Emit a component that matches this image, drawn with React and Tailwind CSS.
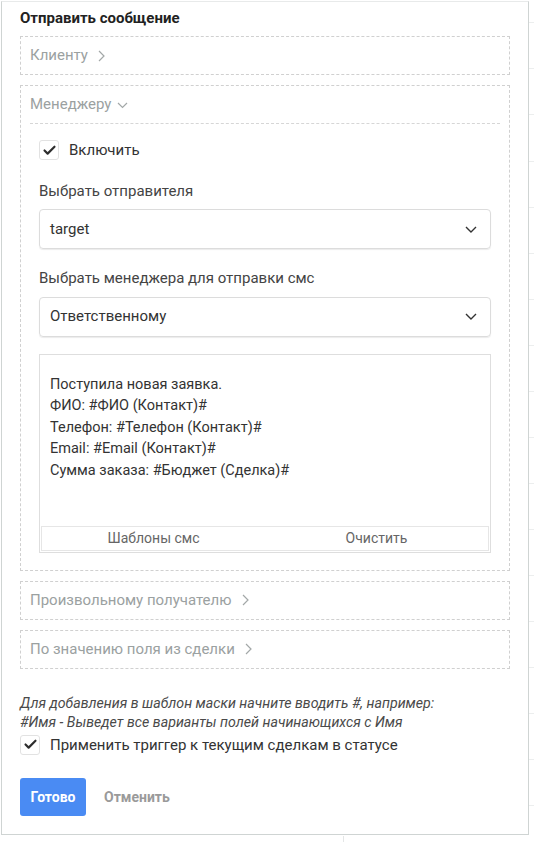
import React from 'react'
import { Check } from 'lucide-react'

const font = { fontFamily: 'Roboto, "Noto Sans", sans-serif' }

function Chevron({ down }) {
  return down ? (
    <svg width="11" height="7" viewBox="0 0 11 7" className="ml-[6px] mt-[2px]">
      <polyline points="1,1 5.5,5.5 10,1" fill="none" stroke="#a3a8a8" strokeWidth="1.2" />
    </svg>
  ) : (
    <svg width="7" height="12" viewBox="0 0 7 12" className="ml-[10px]">
      <polyline points="1,1 6,6 1,11" fill="none" stroke="#a3a8a8" strokeWidth="1.2" />
    </svg>
  )
}

function Section({ title }) {
  return (
    <div className="h-[39px] border border-dashed border-[#d0d0d0] px-[9px] flex items-center text-[15px] text-[#9ba1a1]">
      {title}
      <Chevron />
    </div>
  )
}

function Box({ checked = true }) {
  return (
    <div className="w-[20px] h-[20px] rounded-[3px] border border-[#e2e2e2] bg-white flex items-center justify-center shrink-0">
      {checked && <Check size={15} strokeWidth={3.4} color="#2d2d2d" />}
    </div>
  )
}

function Select({ value }) {
  return (
    <div className="h-[40px] rounded-[4px] border border-[#dcdcdc] shadow-[0_1px_1px_rgba(0,0,0,0.08)] flex items-center justify-between pl-[10px] pr-[13px] text-[15px] text-[#333]">
      <span>{value}</span>
      <svg width="12" height="7" viewBox="0 0 12 7">
        <polyline points="1,1 6,6 11,1" fill="none" stroke="#333" strokeWidth="1.4" />
      </svg>
    </div>
  )
}

export default function App() {
  const lines = [
    'Поступила новая заявка.',
    'ФИО: #ФИО (Контакт)#',
    'Телефон: #Телефон (Контакт)#',
    'Email: #Email (Контакт)#',
    'Сумма заказа: #Бюджет (Сделка)#',
  ]

  return (
    <div className="w-[534px] h-[842px] bg-white relative overflow-hidden" style={font}>
      {/* background grid peeking around the panel */}
      <div className="absolute right-0 top-0 w-[5px] h-full">
        {[22, 68, 114, 161, 207, 253, 299, 345, 391, 437, 483, 529, 575, 621, 667, 713, 759, 805].map((y) => (
          <div key={y} className="absolute left-0 w-full h-px bg-[#eceeee]" style={{ top: y }} />
        ))}
      </div>
      <div className="absolute left-[343px] top-[836px] w-px h-[6px] bg-[#e4e6e6]" />

      <div className="pl-px pt-px">
        <div className="w-[528px] h-[834px] border border-[#cfd4d3] border-t-[#e8eaea] bg-white px-[18px]">
          <div className="h-[34px] pt-[5px] text-[15px] font-bold text-[#222]">Отправить сообщение</div>

          <div className="flex flex-col gap-[10px]">
            <Section title="Клиенту" />

            <div className="border border-dashed border-[#d0d0d0] px-[9px] pb-[17px]">
              <div className="h-[38px] flex items-center text-[15px] text-[#9ba1a1] border-b border-dashed border-[#d6d6d6]">
                Менеджеру
                <Chevron down />
              </div>

              <div className="px-[9px]">
                <div className="flex items-center gap-[10px] mt-[15px] text-[15px] text-[#333]">
                  <Box />
                  <span>Включить</span>
                </div>

                <div className="mt-[18px] mb-[7px] text-[15px] text-[#444]">Выбрать отправителя</div>
                <Select value="target" />

                <div className="mt-[18px] mb-[7px] text-[15px] text-[#444]">Выбрать менеджера для отправки смс</div>
                <Select value="Ответственному" />

                <div className="mt-[17px] h-[199px] border border-[#dedede] flex flex-col">
                  <div className="flex-1 px-[10px] pt-[19px] text-[14.5px] leading-[21.5px] text-[#333]">
                    {lines.map((l) => (
                      <div key={l}>{l}</div>
                    ))}
                  </div>
                  <div className="h-[25px] mx-px mb-px border border-[#e6e6e6] flex text-[14px] text-[#666]">
                    <div className="flex-1 flex items-center justify-center">Шаблоны смс</div>
                    <div className="flex-1 flex items-center justify-center">Очистить</div>
                  </div>
                </div>
              </div>
            </div>

            <Section title="Произвольному получателю" />
            <Section title="По значению поля из сделки" />
          </div>

          <div className="mt-[25px] text-[14.2px] italic leading-[19px] text-[#4a4a4a]">
            <div>Для добавления в шаблон маски начните вводить #, например:</div>
            <div>#Имя - Выведет все варианты полей начинающихся с Имя</div>
          </div>

          <div className="flex items-center gap-[10px] mt-[2px] text-[15px] text-[#333]">
            <Box />
            <span>Применить триггер к текущим сделкам в статусе</span>
          </div>

          <div className="flex items-center mt-[22px]">
            <button className="h-[38px] w-[66px] rounded-[3px] bg-[#4a8bf3] text-white text-[14px] font-bold">Готово</button>
            <button className="ml-[18px] text-[14px] font-bold text-[#9a9a9a]">Отменить</button>
          </div>
        </div>
      </div>
    </div>
  )
}
